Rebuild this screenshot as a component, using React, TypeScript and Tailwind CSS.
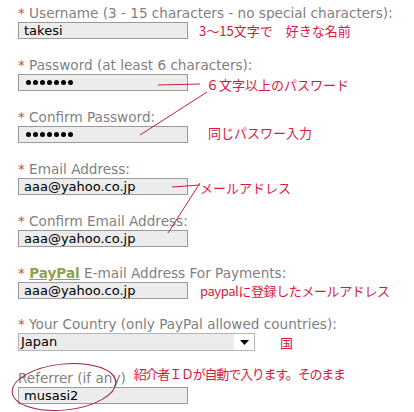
import React from "react";

const labelCls =
  "h-[18px] leading-[18px] text-[13.6px] text-[#7f7f7f] whitespace-nowrap";
const boxCls =
  "w-[170px] h-[17px] border border-[#9a9a9a] bg-[#ececec] text-[13px] leading-[15px] pl-[5px] text-black whitespace-nowrap overflow-hidden";
const noteCls =
  "text-[13px] leading-[15px] text-[#d8183c] whitespace-nowrap font-['Noto_Sans_CJK_JP','DejaVu_Sans',sans-serif]";

function Star() {
  return <span className="text-[#d24a4a]">*</span>;
}

function Dots() {
  return (
    <div className="flex items-center gap-[2px] h-full pl-[2px]">
      {Array.from({ length: 7 }).map((_, i) => (
        <span key={i} className="block w-[5px] h-[5px] rounded-full bg-black" />
      ))}
    </div>
  );
}

export default function App() {
  return (
    <div className="relative w-[414px] h-[412px] bg-white overflow-hidden pl-[18px] pt-[4px] font-['DejaVu_Sans','Noto_Sans_CJK_JP',sans-serif]">
      {/* Username */}
      <div className="mb-[17px]">
        <div className={labelCls}>
          <Star /> Username (3 - 15 characters - no special characters):
        </div>
        <div className="flex items-center">
          <div className={boxCls}>takesi</div>
          <div className={`${noteCls} ml-[11px]`}>3～15文字で　好きな名前</div>
        </div>
      </div>

      {/* Password */}
      <div className="mb-[16px]">
        <div className={labelCls}>
          <Star /> Password (at least 6 characters):
        </div>
        <div className="flex items-start">
          <div className={boxCls}>
            <Dots />
          </div>
          <div className={`${noteCls} ml-[18px] mt-[3px]`}>６文字以上のパスワード</div>
        </div>
      </div>

      {/* Confirm Password */}
      <div className="mb-[17px]">
        <div className={labelCls}>
          <Star /> Confirm Password:
        </div>
        <div className="flex items-start">
          <div className={boxCls}>
            <Dots />
          </div>
          <div className={`${noteCls} ml-[20px] mt-[-1px]`}>同じパスワー入力</div>
        </div>
      </div>

      {/* Email */}
      <div className="mb-[17px]">
        <div className={labelCls}>
          <Star /> Email Address:
        </div>
        <div className="flex items-start">
          <div className={boxCls}>aaa@yahoo.co.jp</div>
          <div className={`${noteCls} ml-[12px] mt-[2px]`}>メールアドレス</div>
        </div>
      </div>

      {/* Confirm Email */}
      <div className="mb-[17px]">
        <div className={labelCls}>
          <Star /> Confirm Email Address:
        </div>
        <div className="flex items-center">
          <div className={boxCls}>aaa@yahoo.co.jp</div>
        </div>
      </div>

      {/* PayPal */}
      <div className="mb-[16px]">
        <div className={labelCls}>
          <Star />{" "}
          <span className="font-bold underline text-[#8ca24c]">PayPal</span> E-mail
          Address For Payments:
        </div>
        <div className="flex items-center">
          <div className={boxCls}>aaa@yahoo.co.jp</div>
          <div className={`${noteCls} ml-[12px] tracking-[-0.4px]`}>paypalに登録したメールアドレス</div>
        </div>
      </div>

      {/* Country */}
      <div className="mb-[18px]">
        <div className={labelCls}>
          <Star /> Your Country (only PayPal allowed countries):
        </div>
        <div className="flex items-center">
          <div className="flex w-[237px] h-[18px] border border-[#b4b4b4] bg-white">
            <div className="flex-1 bg-[#ececec] text-[13px] leading-[16px] pl-[2px] text-black">
              Japan
            </div>
            <div className="w-[20px] flex items-center justify-center">
              <svg width="9" height="5" viewBox="0 0 9 5">
                <polygon points="0,0 9,0 4.5,5" fill="#000" />
              </svg>
            </div>
          </div>
          <div className={`${noteCls} ml-[25px]`}>国</div>
        </div>
      </div>

      {/* Referrer */}
      <div>
        <div className="flex items-end h-[18px]">
          <div className={labelCls}>Referrer (if any)</div>
          <div className={`${noteCls} text-[12px] tracking-[-1.2px] ml-[8px] mb-[6px]`}>
            紹介者ＩＤが自動で入ります。そのまま
          </div>
        </div>
        <div className="flex items-center">
          <div className={boxCls}>musasi2</div>
        </div>
      </div>

      {/* annotation lines */}
      <svg
        className="absolute inset-0 pointer-events-none"
        width="414"
        height="412"
        viewBox="0 0 414 412"
      >
        <g stroke="#c8203e" strokeWidth="1" fill="none">
          <line x1="158" y1="85" x2="200" y2="84" />
          <line x1="140" y1="135" x2="207" y2="92" />
          <line x1="172" y1="187" x2="200" y2="185" />
          <line x1="168" y1="233" x2="200" y2="183" />
        </g>
        <ellipse
          cx="64"
          cy="387"
          rx="52"
          ry="23"
          transform="rotate(-6 64 387)"
          stroke="#a8203c"
          strokeWidth="1"
          fill="none"
        />
      </svg>
    </div>
  );
}
